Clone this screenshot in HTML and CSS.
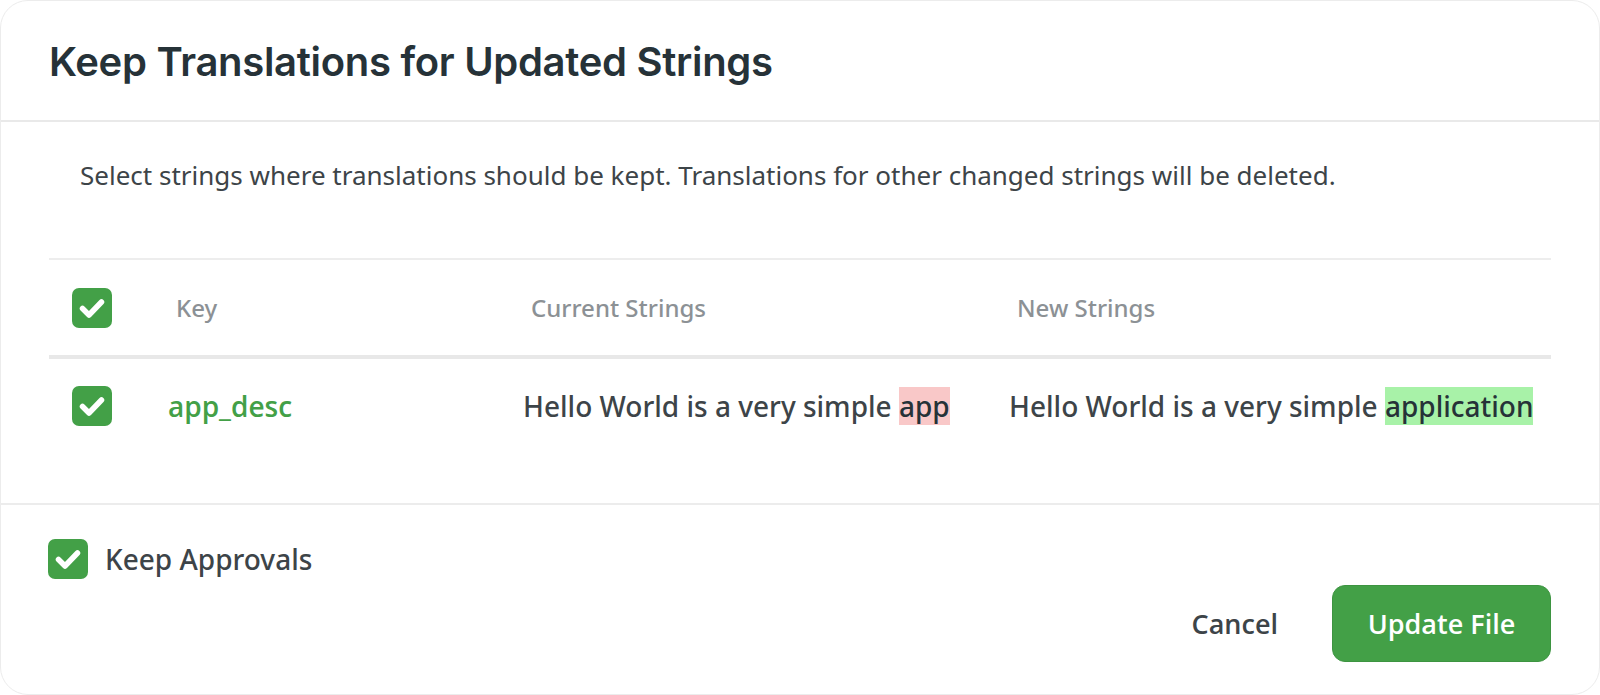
FILE: index.html
```html
<!DOCTYPE html>
<html lang="en">
<head>
<meta charset="utf-8">
<title>Keep Translations for Updated Strings</title>
<link rel="stylesheet" href="styles.css">
</head>
<body>
<div class="modal">
  <div class="modal-header">
    <h1 class="modal-title">Keep Translations for Updated Strings</h1>
  </div>
  <div class="modal-body">
    <p class="description">Select strings where translations should be kept. Translations for other changed strings will be deleted.</p>
    <div class="table">
      <div class="table-head">
        <div class="cell cell-check"><span class="checkbox"><svg viewBox="0 0 40 40"><path d="M10.5 20.5 L17 27 L29.5 14" /></svg></span></div>
        <div class="cell head-label">Key</div>
        <div class="cell head-label">Current Strings</div>
        <div class="cell head-label">New Strings</div>
      </div>
      <div class="table-row">
        <div class="cell cell-check"><span class="checkbox"><svg viewBox="0 0 40 40"><path d="M10.5 20.5 L17 27 L29.5 14" /></svg></span></div>
        <div class="cell key">app_desc</div>
        <div class="cell string">Hello World is a very simple <span class="removed">app</span></div>
        <div class="cell string">Hello World is a very simple <span class="added">application</span></div>
      </div>
    </div>
  </div>
  <div class="modal-footer">
    <label class="keep-approvals"><span class="checkbox"><svg viewBox="0 0 40 40"><path d="M10.5 20.5 L17 27 L29.5 14" /></svg></span><span>Keep Approvals</span></label>
    <div class="actions">
      <button class="btn btn-link">Cancel</button>
      <button class="btn btn-primary">Update File</button>
    </div>
  </div>
</div>
</body>
</html>
```

FILE: styles.css
```css
* { box-sizing: border-box; }

html, body {
  margin: 0;
  padding: 0;
  background: #ffffff;
}

body {
  font-family: "Open Sans", "Noto Sans", sans-serif;
  color: #3d4448;
}

.modal {
  width: 1600px;
  height: 695px;
  border: 1px solid #ececec;
  border-radius: 28px;
  background: #ffffff;
  display: flex;
  flex-direction: column;
  overflow: hidden;
}

.modal-header {
  height: 121px;
  flex: none;
  border-bottom: 2px solid #e9e9e9;
  display: flex;
  align-items: center;
  padding-left: 48px;
  padding-top: 2px;
}

.modal-title {
  margin: 0;
  font-family: "Inter", "Liberation Sans", sans-serif;
  font-weight: 600;
  font-size: 40px;
  letter-spacing: -0.3px;
  color: #263238;
}

.modal-body {
  padding: 37px 48px 0 48px;
  flex: none;
}

.description {
  margin: 0 0 0 31px;
  font-family: "Noto Sans", "Open Sans", sans-serif;
  font-weight: 400;
  font-size: 26px;
  line-height: 32px;
  color: #3d4448;
}

.table {
  margin-top: 67px;
  border-top: 2px solid #ededed;
}

.table-head,
.table-row {
  display: grid;
  grid-template-columns: 119px 355px 486px 1fr;
  align-items: center;
}

.table-head {
  height: 99px;
  border-bottom: 4px solid #e8e8e8;
}

.table-row {
  height: 94px;
}

.cell-check {
  padding-left: 23px;
  display: flex;
  align-items: center;
}

.checkbox {
  width: 40px;
  height: 40px;
  border-radius: 7px;
  background: #43a047;
  display: inline-flex;
  flex: none;
}

.checkbox svg {
  width: 40px;
  height: 40px;
}

.checkbox path {
  fill: none;
  stroke: #ffffff;
  stroke-width: 5.5;
  stroke-linecap: round;
  stroke-linejoin: round;
}

.head-label {
  padding-left: 8px;
  font-family: "Noto Sans", "Open Sans", sans-serif;
  font-weight: 500;
  font-size: 24px;
  color: #8c9195;
}

.key {
  font-size: 28px;
  font-weight: 600;
  color: #43a047;
}

.string {
  font-family: "Noto Sans", "Open Sans", sans-serif;
  font-size: 28px;
  font-weight: 500;
  line-height: 39px;
  color: #3d4448;
  white-space: nowrap;
}

.removed {
  background: #f9c8c8;
  color: #263238;
}

.added {
  background: #a8f2a8;
  color: #263238;
}

.modal-footer {
  margin-top: 50px;
  border-top: 2px solid #ececec;
  padding: 34px 48px 0 47px;
  display: flex;
  flex-direction: column;
}

.keep-approvals {
  display: flex;
  align-items: center;
  gap: 17px;
  font-family: "Noto Sans", "Open Sans", sans-serif;
  font-size: 28px;
  font-weight: 500;
  color: #3d4448;
}

.actions {
  display: flex;
  justify-content: flex-end;
  align-items: center;
  gap: 54px;
  margin-top: 6px;
}

.btn {
  font-family: "Open Sans", "Noto Sans", sans-serif;
  font-size: 27px;
  font-weight: 600;
  border: none;
  background: none;
  cursor: pointer;
}

.btn-link {
  color: #3d4448;
  padding: 0;
}

.btn-primary {
  width: 219px;
  height: 77px;
  border-radius: 13px;
  background: #43a047;
  border: 1px solid #3d9441;
  color: #ffffff;
}
```
